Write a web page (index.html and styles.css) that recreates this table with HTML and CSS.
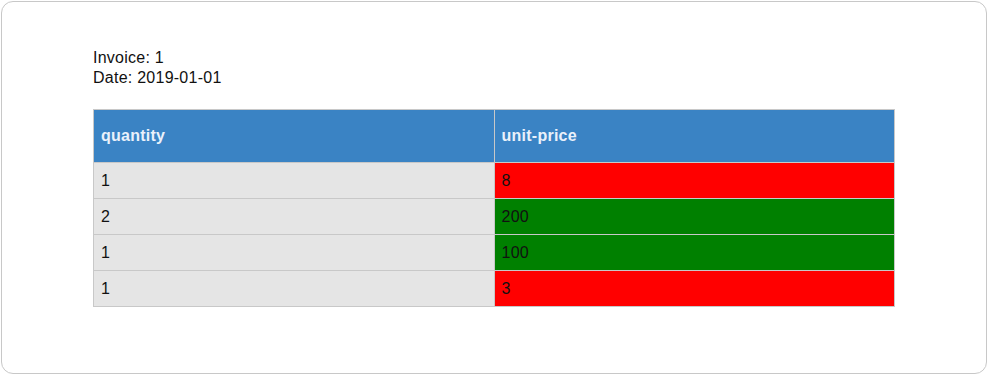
FILE: index.html
```html
<!DOCTYPE html>
<html>
<head>
<meta charset="utf-8">
<link rel="stylesheet" href="styles.css">
</head>
<body>
<div class="card">
  <div class="meta">
    <div class="line">Invoice: 1</div>
    <div class="line">Date: 2019-01-01</div>
  </div>
  <table class="items">
    <thead>
      <tr><th>quantity</th><th>unit-price</th></tr>
    </thead>
    <tbody>
      <tr><td class="qty">1</td><td class="bad">8</td></tr>
      <tr><td class="qty">2</td><td class="good">200</td></tr>
      <tr><td class="qty">1</td><td class="good">100</td></tr>
      <tr><td class="qty">1</td><td class="bad">3</td></tr>
    </tbody>
  </table>
</div>
</body>
</html>
```

FILE: styles.css
```css
html, body {
  margin: 0;
  padding: 0;
  background: #fff;
}
body {
  font-family: "Liberation Sans", Arial, sans-serif;
  font-size: 16px;
  letter-spacing: 0.25px;
  color: #111;
}
.card {
  margin: 1px;
  height: 373px;
  box-sizing: border-box;
  border: 1px solid #c8c8c8;
  border-radius: 12px;
  padding: 46px 92px 0 91px;
}
.meta .line {
  line-height: 20px;
  height: 20px;
}
.items {
  margin-top: 21px;
  width: 802px;
  border-collapse: collapse;
  table-layout: fixed;
}
.items th, .items td {
  border: 1px solid #c8c8c8;
  text-align: left;
  padding: 0 7px;
}
.items th {
  background: #3a83c4;
  color: #eaf1fb;
  font-weight: bold;
  height: 52px;
}
.items td {
  height: 35px;
  color: #111;
}
.items td.qty {
  background: #e5e5e5;
}
.items td.bad {
  background: #ff0000;
}
.items td.good {
  background: #008000;
}
```
